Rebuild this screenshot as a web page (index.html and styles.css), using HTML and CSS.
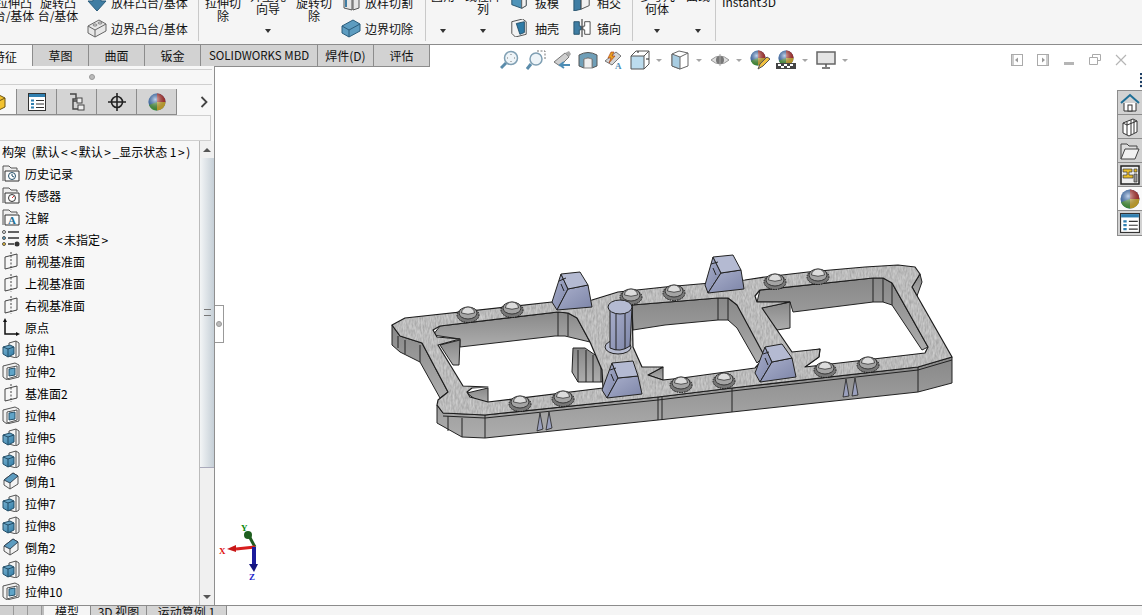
FILE: index.html
```html
<!DOCTYPE html>
<html lang="zh">
<head>
<meta charset="utf-8">
<title>SOLIDWORKS</title>
<link rel="stylesheet" href="styles.css">
</head>
<body>
<svg class="defs" width="0" height="0" aria-hidden="true">
  <defs>
    <linearGradient id="blueFace" x1="0" y1="0" x2="1" y2="1"><stop offset="0" stop-color="#7fb6d3"/><stop offset="1" stop-color="#2f7ba6"/></linearGradient>
    <linearGradient id="wallGrad" x1="0" y1="0" x2="0" y2="1"><stop offset="0" stop-color="#888888"/><stop offset="1" stop-color="#adadad"/></linearGradient>
    <linearGradient id="blueGrad" x1="0" y1="0" x2="1" y2="1"><stop offset="0" stop-color="#aab0cc"/><stop offset="1" stop-color="#7d85a8"/></linearGradient>
    <radialGradient id="ballGrad" cx=".4" cy=".35" r=".7"><stop offset="0" stop-color="#ffffff" stop-opacity=".7"/><stop offset="1" stop-color="#000000" stop-opacity=".2"/></radialGradient>
    <filter id="brushed" x="0" y="0" width="100%" height="100%">
      <feTurbulence type="fractalNoise" baseFrequency="0.6 0.2" numOctaves="2" seed="4"/>
      <feColorMatrix type="matrix" values="0 0 0 0 0.92  0 0 0 0 0.92  0 0 0 0 0.92  0.7 0 0 0 -0.15"/>
      <feComposite in2="SourceGraphic" operator="in"/>
      <feMerge><feMergeNode in="SourceGraphic"/><feMergeNode/></feMerge>
    </filter>
    <symbol id="i-ext" viewBox="0 0 18 18">
      <path d="M7 3l7-2 3 2v13l-3 2-7-2z" fill="#f4f4f4" stroke="#555"/><path d="M14 1v17" stroke="#555" fill="none"/>
      <path d="M1 7l7-2 4 2v7l-6 3-5-3z" fill="url(#blueFace)" stroke="#234e68"/><path d="M1 7l5 2 6-2M6 9v8" stroke="#234e68" fill="none"/>
    </symbol>
    <symbol id="i-cut" viewBox="0 0 18 18">
      <path d="M1 4l12-3 4 2v12l-12 3-4-3z" fill="#f1f1f1" stroke="#555"/><path d="M5 6l10-2v10l-10 3z" fill="#fff" stroke="#555"/>
      <path d="M7 7l6-1v7l-6 1z" fill="#5fa4c8" stroke="#234e68"/>
    </symbol>
    <symbol id="i-chamfer" viewBox="0 0 18 18">
      <path d="M2 8l9-7 5 3v8l-8 5-6-4z" fill="#f3f3f3" stroke="#555"/><path d="M2 8l6 3 8-7-5-3z" fill="#5d9cc0" stroke="#345"/><path d="M8 11v6" stroke="#555"/>
    </symbol>
    <symbol id="i-plane" viewBox="0 0 18 18">
      <path d="M3 5l12-3v12l-12 3z" fill="none" stroke="#444"/><path d="M9 0v18" stroke="#444" stroke-dasharray="2 1.5" fill="none"/>
    </symbol>
    <symbol id="i-folder" viewBox="0 0 18 18">
      <path d="M1 17V2h6l2 2h6v2" fill="#eee" stroke="#555"/><path d="M3 17V7h14v10z" fill="#fbfbfb" stroke="#333"/>
    </symbol>
    <symbol id="i-block" viewBox="0 0 20 20">
      <path d="M1 8l11-6 7 4v7l-11 6-7-4z" fill="#e7e7e7" stroke="#666"/><path d="M1 8l7 4 11-6M8 12v7" fill="none" stroke="#666"/>
      <ellipse cx="8" cy="7" rx="2" ry="1" fill="#fff" stroke="#777"/><ellipse cx="13" cy="5" rx="2" ry="1" fill="#fff" stroke="#777"/>
    </symbol>
    <symbol id="i-ball" viewBox="0 0 18 18">
      <circle cx="9" cy="9" r="8.5" fill="#2f6fc4"/><path d="M9 9L9 .5A8.5 8.5 0 0 1 17.5 9z" fill="#c22b26"/><path d="M9 9h8.5A8.5 8.5 0 0 1 9 17.5z" fill="#e8bd2b"/><path d="M9 9v8.5A8.5 8.5 0 0 1 1 12z" fill="#4aa53a"/>
      <circle cx="9" cy="9" r="8.5" fill="url(#ballGrad)"/>
    </symbol>
    <symbol id="i-list" viewBox="0 0 18 18">
      <rect x=".5" y=".5" width="17" height="17" fill="#fff" stroke="#333"/><rect x="1" y="1" width="16" height="3" fill="#2f7fb0"/>
      <path d="M3 6.500h3v2H3zM3 10h3v2H3zM3 13.500h3v2H3z" fill="#2f7fb0"/><path d="M8 7.500h8M8 11h8M8 14.500h8" stroke="#333" fill="none"/>
    </symbol>
  </defs>
</svg>

<div class="ribbon">
  <div class="big">拉伸凸<br>台/基体</div>
  <div class="big">旋转凸<br>台/基体</div>
  <div class="stack w111">
    <div class="tool"><svg class="ti" viewBox="0 0 20 20"><path d="M6 0h8v9h5l-9 10-9-10h5z" fill="#3f7da3" stroke="#2b5d7c"/></svg>放样凸台/基体</div>
    <div class="tool"><svg class="ti"><use href="#i-block"/></svg>边界凸台/基体</div>
  </div>
  <div class="sep"></div>
  <div class="big w48">拉伸切<br>除</div>
  <div class="big raised w42">异型孔<br>向导<i class="caret"></i></div>
  <div class="big w50">旋转切<br>除</div>
  <div class="stack w84">
    <div class="tool"><svg class="ti" viewBox="0 0 20 20"><path d="M3 2l8-2v18l-8-2zM12 2l6-1v15l-6 2z" fill="#e6e6e6" stroke="#555"/><path d="M5 3v12" stroke="#3f7da3" stroke-width="2"/></svg>放样切割</div>
    <div class="tool"><svg class="ti" viewBox="0 0 20 20"><path d="M1 8l11-6 7 4v7l-11 6-7-4z" fill="#5d9cc0" stroke="#2b5d7c"/><path d="M1 8l7 4 11-6M8 12v7" fill="none" stroke="#2b5d7c"/></svg>边界切除</div>
  </div>
  <div class="sep"></div>
  <div class="big raised w34">圆角<br>&nbsp;<i class="caret"></i></div>
  <div class="big raised w46">线性阵<br>列<i class="caret"></i></div>
  <div class="stack w64">
    <div class="tool tight"><svg class="ti" viewBox="0 0 20 20"><path d="M2 3l7-3 9 4v10l-5 3-11-4z" fill="#4f93b8" stroke="#234e68"/><path d="M13 7l5-3v10l-5 3z" fill="#f1f1f1" stroke="#555"/></svg>拔模</div>
    <div class="tool tight"><svg class="ti" viewBox="0 0 20 20"><path d="M2 3l12-3 4 3v14l-12 3-4-4z" fill="#f3f3f3" stroke="#444"/><path d="M7 5l9-2v12l-5 2z" fill="#2f7ba6" stroke="#234e68"/></svg>抽壳</div>
  </div>
  <div class="stack w64 narrow">
    <div class="tool tight"><svg class="ti" viewBox="0 0 20 20"><path d="M1 6l8-2v14l-8 2z" fill="#3f7da3" stroke="#234e68"/><path d="M9 4l9-4v14l-9 4z" fill="#f1f1f1" stroke="#444"/></svg>相交</div>
    <div class="tool tight"><svg class="ti" viewBox="0 0 20 20"><path d="M1 3h6v5h2v4H7v5H1z" fill="#3f7da3" stroke="#234e68"/><path d="M19 3h-6v5h-2v4h2v5h6z" fill="#fff" stroke="#444"/><path d="M10 0v20" stroke="#111"/></svg>镜向</div>
  </div>
  <div class="sep"></div>
  <div class="big raised w48">参考几<br>何体<i class="caret"></i></div>
  <div class="big raised w34">曲线<br>&nbsp;<i class="caret"></i></div>
  <div class="sep"></div>
  <div class="instant">Instant3D</div>
</div>

<div class="tabrow">
  <div class="tab tab-active">特征</div>
  <div class="tab w56">草图</div>
  <div class="tab w56">曲面</div>
  <div class="tab w56">钣金</div>
  <div class="tab w117"><span class="latin">SOLIDWORKS MBD</span></div>
  <div class="tab w56">焊件(D)</div>
  <div class="tab w56">评估</div>
</div>

<div class="main">
  <aside class="panel">
    <div class="grip"><span class="dot"></span></div>
    <div class="ptabs">
      <div class="ptab ptab-first"><svg class="pi-cube" viewBox="0 0 18 18"><path d="M1 5l8-4 8 4v9l-8 4-8-4z" fill="#f2c230" stroke="#6b5310"/><path d="M1 5l8 4 8-4M9 9v9" fill="none" stroke="#6b5310"/></svg></div>
      <div class="ptab"><svg class="pi"><use href="#i-list"/></svg></div>
      <div class="ptab"><svg class="pi" viewBox="0 0 18 18"><path d="M2 1h6v5H5v10h5M5 8h5" fill="none" stroke="#444" stroke-width="1.400"/><rect x="9" y="5" width="5" height="5" fill="#eee" stroke="#444"/><rect x="10" y="12" width="6" height="5" fill="#eee" stroke="#444"/></svg></div>
      <div class="ptab"><svg class="pi" viewBox="0 0 18 18"><circle cx="9" cy="9" r="5.500" fill="none" stroke="#222" stroke-width="1.600"/><path d="M9 0v18M0 9h18" stroke="#222" stroke-width="1.600"/></svg></div>
      <div class="ptab"><svg class="pi"><use href="#i-ball"/></svg></div>
      <div class="pmore"><svg class="chev" viewBox="0 0 8 12"><path d="M1.500 1l5 5-5 5" fill="none" stroke="#444" stroke-width="1.800"/></svg></div>
    </div>
    <div class="filter"></div>
    <div class="treewrap">
      <div class="tree">
        <div class="row"><span class="root-text">构架 &nbsp;(默认<span class="ang">&lt;</span><span class="ang">&lt;</span>默认<span class="ang">&gt;</span>_显示状态 1<span class="ang">&gt;</span>)</span></div>
        <div class="row"><svg class="ri" viewBox="0 0 18 18"><use href="#i-folder"/><circle cx="10" cy="12" r="3.500" fill="#fff" stroke="#234e68"/><path d="M10 10v2l2 1" stroke="#234e68" fill="none"/></svg>历史记录</div>
        <div class="row"><svg class="ri" viewBox="0 0 18 18"><use href="#i-folder"/><circle cx="10" cy="12" r="3.500" fill="#fff" stroke="#333"/><path d="M10 12l2-2" stroke="#d33"/></svg>传感器</div>
        <div class="row"><svg class="ri" viewBox="0 0 18 18"><use href="#i-folder"/><text x="6" y="16" class="icon-a">A</text></svg>注解</div>
        <div class="row"><svg class="ri" viewBox="0 0 18 18"><circle cx="2" cy="2" r="1.500" fill="#eee" stroke="#555"/><circle cx="2" cy="8" r="1.500" fill="#5fa4c8" stroke="#555"/><circle cx="2" cy="14" r="1.500" fill="#f2c230" stroke="#555"/><path d="M6 2h11M6 8h11M6 14h6" stroke="#333" stroke-width="1.400"/><circle cx="15" cy="14" r="2.500" fill="#333"/></svg><span>材质 &nbsp;<span class="ang">&lt;</span>未指定<span class="ang">&gt;</span></span></div>
        <div class="row"><svg class="ri"><use href="#i-plane"/></svg>前视基准面</div>
        <div class="row"><svg class="ri"><use href="#i-plane"/></svg>上视基准面</div>
        <div class="row"><svg class="ri"><use href="#i-plane"/></svg>右视基准面</div>
        <div class="row"><svg class="ri" viewBox="0 0 18 18"><path d="M3 2v14h12" fill="none" stroke="#111" stroke-width="1.500"/><path d="M3 0l-2 4h4zM18 16l-4-2v4z" fill="#111"/></svg>原点</div>
        <div class="row"><svg class="ri"><use href="#i-ext"/></svg>拉伸1</div>
        <div class="row"><svg class="ri"><use href="#i-cut"/></svg>拉伸2</div>
        <div class="row"><svg class="ri"><use href="#i-plane"/></svg>基准面2</div>
        <div class="row"><svg class="ri"><use href="#i-cut"/></svg>拉伸4</div>
        <div class="row"><svg class="ri"><use href="#i-ext"/></svg>拉伸5</div>
        <div class="row"><svg class="ri"><use href="#i-ext"/></svg>拉伸6</div>
        <div class="row"><svg class="ri"><use href="#i-chamfer"/></svg>倒角1</div>
        <div class="row"><svg class="ri"><use href="#i-ext"/></svg>拉伸7</div>
        <div class="row"><svg class="ri"><use href="#i-ext"/></svg>拉伸8</div>
        <div class="row"><svg class="ri"><use href="#i-chamfer"/></svg>倒角2</div>
        <div class="row"><svg class="ri"><use href="#i-ext"/></svg>拉伸9</div>
        <div class="row"><svg class="ri"><use href="#i-cut"/></svg>拉伸10</div>
      </div>
      <div class="scroll">
        <div class="sbtn"><i class="up"></i></div>
        <div class="thumb"><span class="thumb-grip"></span></div>
        <div class="track"></div>
        <div class="sbtn"><i class="down"></i></div>
      </div>
    </div>
  </aside>

  <section class="view">
    <div class="handle"><span class="dot"></span></div>

    <svg class="model" viewBox="215 67 927 538" aria-label="model">
      <defs>
        <g id="bolt">
          <ellipse cx="0" cy="2" rx="11" ry="7.500" fill="#777" stroke="#111" stroke-dasharray="1.500 1"/>
          <ellipse cx="0" cy="0" rx="9" ry="6" fill="#a4a4a4" stroke="#222" stroke-width=".8"/>
          <path d="M-6.500 0a6.500 6 0 0 1 13 0q-6.500 2.500-13 0z" fill="#dcdcdc" stroke="#333" stroke-width=".8"/>
        </g>
        <path id="topface" fill-rule="evenodd" d="M392 325L405 318L552 302L592 300L618 292L665 287L745 280L765 277L808 272L865 267L898 265L915 267L920 274L912 287L952 357L918 367L732 388L658 397L485 415L443 413L437 405L438 400L448 392L422 343L400 336z
        M433 330L440 326L558 312L568 313L577 318L590 342L602 370L603 388L488 402L470 397L467 392L472 388L488 387L463 386L438 345L460 339L437 337z
        M632 305L718 298L728 298L737 305L765 357L755 368L682 378L663 380L648 375L663 367L642 367L633 347z
        M755 296L760 290L873 278L883 278L892 283L928 347L925 353L805 367L819 357L820 349L792 352L762 308L790 302L757 302z"/>
      </defs>
      <!-- outer side walls -->
      <g class="wall">
        <path d="M392 325L392 345L400 352L420 362L440 398L448 392L422 343L400 336z"/>
        <path d="M437 405L437 423L462 437L485 438L658 420L732 412L918 392L952 383L952 357L918 367L732 388L658 397L485 415L443 413z"/>
        <path d="M920 274L912 287L917 296L922 282z"/>
      </g>
      <g class="edge">
        <path d="M448 416L448 431M462 418L462 437M485 415L485 438M658 397L658 420M662 397L662 420M732 388L732 412M918 367L918 392M405 340L405 354M398 336L398 348M420 345L420 362"/>
        <path d="M443 416L485 418L658 400L732 391L918 370L952 360"/>
      </g>
      <!-- inner walls seen through the windows -->
      <g class="wall">
        <path d="M440 326L558 312L568 313L577 318L590 342L565 336L555 336L460 347L460 339L433 335z"/>
        <path d="M440 345L460 340L459 365L453 365z"/>
        <path d="M467 393L488 388L488 402L480 403z"/>
        <path d="M573 348L585 348L598 357L607 365L602 382L578 382L572 372z"/>
        <path d="M632 305L718 298L728 298L737 305L765 355L757 363L737 328L728 320L718 320L665 325L633 330z"/>
        <path d="M648 375L663 367L663 380z"/>
        <path d="M760 290L873 278L883 278L892 283L928 347L922 350L892 305L883 302L873 302L793 312L790 302L757 302z"/>
        <path d="M761 308L790 302L790 328L777 330z"/>
        <path d="M792 354L820 349L819 357L805 367z"/>
      </g>
      <g class="edge">
        <path d="M558 312L558 336M568 313L568 336M718 298L718 320M728 298L728 320M873 278L873 302M883 278L883 302M892 283L892 305"/>
        <path d="M578 350L578 382M586 350L586 382M593 355L593 382M601 360L601 382"/>
      </g>
      <!-- top face with the three windows cut out -->
      <use href="#topface" class="top-fill"/>
      <use href="#topface" class="top-line"/>
      <!-- bolts -->
      <g class="bolts">
        <use href="#bolt" x="468" y="313"/>
        <use href="#bolt" x="512" y="308"/>
        <use href="#bolt" x="631" y="295"/>
        <use href="#bolt" x="674" y="291"/>
        <use href="#bolt" x="775" y="280"/>
        <use href="#bolt" x="818" y="275"/>
        <use href="#bolt" x="520" y="402"/>
        <use href="#bolt" x="563" y="397"/>
        <use href="#bolt" x="681" y="383"/>
        <use href="#bolt" x="724" y="379"/>
        <use href="#bolt" x="825" y="368"/>
        <use href="#bolt" x="868" y="363"/>
      </g>
      <!-- cylinder -->
      <ellipse cx="618" cy="347" rx="13" ry="7" fill="#b7bcd0" stroke="#222"/>
      <path class="blue" d="M610 307L610 348Q620 353 630 346L632 307z"/>
      <path class="edge" d="M616 309L616 350M625 309L625 349"/>
      <ellipse class="bluetop" cx="620" cy="307" rx="12" ry="7"/>
      <!-- wedges -->
      <g class="wedge">
        <path class="blue" d="M561 274L568 289L557 310L552 302z"/><path class="blue" d="M568 289L588 285L592 307L557 310z"/><path class="bluetop" d="M561 274L580 272L588 285L568 289z"/>
        <path class="edge" d="M559 281L566 278M564 291L561 284"/>
        <path class="blue" d="M612 363L618 378L607 398L602 390z"/><path class="blue" d="M618 378L638 376L642 394L607 398z"/><path class="bluetop" d="M612 363L633 361L638 376L618 378z"/>
        <path class="edge" d="M610 370L616 368M614 381L611 374"/>
        <path class="blue" d="M713 257L721 273L708 293L705 285z"/><path class="blue" d="M721 273L741 270L744 289L708 293z"/><path class="bluetop" d="M713 257L733 255L741 270L721 273z"/>
        <path class="edge" d="M711 264L718 262M716 275L713 268"/>
        <path class="blue" d="M765 347L772 362L760 382L755 373z"/><path class="blue" d="M772 362L792 358L796 377L760 382z"/><path class="bluetop" d="M765 347L782 344L792 358L772 362z"/>
        <path class="edge" d="M763 354L769 352M768 365L765 358"/>
      </g>
      <!-- pins -->
      <g class="pin">
        <path d="M540 413L543 429L537 431z"/><path d="M549 412L552 428L546 430z"/>
        <path d="M846 379L849 396L843 397z"/><path d="M855 378L858 395L852 396z"/>
      </g>
      <!-- triad -->
      <g class="triad">
        <path d="M255 547L248 534" stroke="#1f5a1f" stroke-width="3" fill="none"/><circle cx="248" cy="535" r="4" fill="#1f5f1f"/>
        <path d="M255 547L236 549" stroke="#d81e1e" stroke-width="3" fill="none"/><path d="M236 545L227 549L236 552z" fill="#c81818"/>
        <path d="M254 547L254 566" stroke="#1c1c9c" stroke-width="4" fill="none"/><path d="M249 564L254 572L258 564z" fill="#14147f"/>
        <text x="241" y="531" class="t-y">Y</text><text x="219" y="554" class="t-x">X</text><text x="249" y="580" class="t-z">Z</text>
      </g>
    </svg>

    <div class="vbar">
      <svg class="vi" viewBox="0 0 20 20"><circle cx="11" cy="8" r="6.500" fill="#eef4f8" stroke="#7f9fb3" stroke-width="1.500"/><path d="M6 13l-5 5" stroke="#5b8cab" stroke-width="3"/><path d="M11 4v1M11 11v1M7 8h1M14 8h1" stroke="#777"/></svg>
      <svg class="vi" viewBox="0 0 20 20"><path d="M11 1h8v8" fill="none" stroke="#777" stroke-dasharray="2 1.500"/><circle cx="10" cy="9" r="6" fill="#eef4f8" stroke="#7f9fb3" stroke-width="1.500"/><path d="M5 14l-4 5" stroke="#5b8cab" stroke-width="3"/></svg>
      <svg class="vi" viewBox="0 0 20 20"><path d="M2 12l11-9 4 4-9 9z" fill="#cfcfcf" stroke="#777"/><path d="M13 3l4-2 2 3-2 3z" fill="#aaa"/><path d="M18 15H9M12 12l-4 3 4 3" stroke="#4d8db5" stroke-width="2" fill="none"/></svg>
      <svg class="vi" viewBox="0 0 20 20"><path d="M1 5q9-5 18 0v11l-5 2V9q-4-2-8 0v9l-5-2z" fill="#6f9fb8" stroke="#555"/><path d="M6 9q4-2 8 0v9H6z" fill="#eee" stroke="#888"/></svg>
      <svg class="vi" viewBox="0 0 20 20"><path d="M1 11l11-9 5 4-9 9z" fill="#d5d5d5" stroke="#777"/><path d="M7 2L4 8h3l-2 5 6-7H8l2-4z" fill="#e8a020" stroke="#a03010" stroke-width=".6"/><text x="11" y="19" class="icon-a small">A</text></svg>
      <span class="vgroup"><svg class="vi" viewBox="0 0 20 20"><path d="M1 6h13v13H1z" fill="#bcdcee" stroke="#555"/><path d="M1 6l5-5h13v13l-5 5M14 6l5-5" fill="none" stroke="#555"/><path d="M8 1v2M16 9h3" stroke="#222"/></svg><i class="vc"></i></span>
      <span class="vgroup"><svg class="vi" viewBox="0 0 20 20"><path d="M2 4l7-3 9 2v13l-8 3-8-3z" fill="#fff" stroke="#666"/><path d="M2 4l8 3v12l-8-3z" fill="#a8cde2" stroke="#666"/><path d="M10 7l8-4" stroke="#666"/></svg><i class="vc"></i></span>
      <span class="vgroup"><svg class="vi" viewBox="0 0 20 20"><path d="M1 10q9-8 18 0q-9 8-18 0z" fill="#ddd" stroke="#999"/><circle cx="10" cy="10" r="4" fill="#777"/><path d="M10 4v12" stroke="#aaa"/></svg><i class="vc"></i></span>
      <svg class="vi" viewBox="0 0 20 20"><use href="#i-ball" width="16" height="16"/><path d="M8 19l2-5 7-7 3 2-7 7z" fill="#f0c040" stroke="#555"/></svg>
      <span class="vgroup"><svg class="vi" viewBox="0 0 20 20"><use href="#i-ball" x="2" width="16" height="16"/><path d="M0 13h20v6H0z" fill="#444"/><path d="M2 14h3v2H2zM8 14h3v2H8zM14 14h3v2h-3zM5 16h3v2H5zM11 16h3v2h-3z" fill="#fff"/></svg><i class="vc"></i></span>
      <span class="vgroup"><svg class="vi" viewBox="0 0 20 20"><rect x="1" y="2" width="18" height="12" fill="#e4e4e4" stroke="#666" stroke-width="1.500"/><path d="M10 14v3M6 18h8" stroke="#555" stroke-width="1.500"/></svg><i class="vc"></i></span>
    </div>

    <div class="wincontrols">
      <svg class="wi" viewBox="0 0 12 12"><rect x=".5" y=".5" width="11" height="11" fill="none" stroke="#aaa"/><path d="M1 1h2v10H1z" fill="#ccc"/><path d="M7 3.500L4 6l3 2.500z" fill="#999"/></svg>
      <svg class="wi" viewBox="0 0 12 12"><rect x=".5" y=".5" width="11" height="11" fill="none" stroke="#aaa"/><path d="M9 1h2v10H9z" fill="#ccc"/><path d="M5 3.500L8 6l-3 2.500z" fill="#999"/></svg>
      <svg class="wi" viewBox="0 0 12 12"><rect x="1" y="8" width="10" height="3" fill="#b5b5b5"/></svg>
      <svg class="wi" viewBox="0 0 12 12"><path d="M3.500 3V.5h8v6H9M.5 3.500h8v7h-8z" fill="none" stroke="#aaa"/></svg>
      <svg class="wi" viewBox="0 0 12 12"><path d="M1 1l10 10M11 1L1 11" stroke="#b5b5b5" stroke-width="1.200"/></svg>
    </div>

    <div class="edge-sliver"></div>

    <div class="taskpane">
      <div class="task"><svg class="tk" viewBox="0 0 20 20"><path d="M1 10L10 2l9 8" fill="none" stroke="#1f6f96" stroke-width="2"/><path d="M4 10v8h12v-8" fill="#fff" stroke="#333"/><rect x="8" y="12" width="4" height="6" fill="#fff" stroke="#333"/></svg></div>
      <div class="task"><svg class="tk" viewBox="0 0 20 20"><path d="M3 6l10-4 4 2v11l-8 4-6-3z" fill="#fff" stroke="#333"/><path d="M7 5v13M11 3v15M14 3v13M3 6l4 2 10-4" fill="none" stroke="#333"/></svg></div>
      <div class="task"><svg class="tk" viewBox="0 0 20 20"><path d="M1 18V3h6l2 2h8v3" fill="#ddd" stroke="#444"/><path d="M1 18l4-10h14l-4 10z" fill="#f1f1f1" stroke="#444"/></svg></div>
      <div class="task"><svg class="tk" viewBox="0 0 20 20"><rect x="1" y="1" width="18" height="18" fill="#eee" stroke="#222" stroke-width="1.500"/><path d="M3 4h9v3H9v3h4v3H3v-3h4V7H3z" fill="#e8bd2b" stroke="#333" stroke-width=".7"/><path d="M14 4h3v3h-3z" fill="#e8bd2b" stroke="#333" stroke-width=".7"/><path d="M14 9h3v8h-3z" fill="#999" stroke="#333" stroke-width=".7"/></svg></div>
      <div class="task task-on"><svg class="tk"><use href="#i-ball"/></svg></div>
      <div class="task"><svg class="tk"><use href="#i-list"/></svg></div>
    </div>
  </section>
</div>

<div class="bottom">
  <div class="nav">
    <span class="navb"></span><span class="navb"></span><span class="navb"></span>
  </div>
  <div class="btab btab-on">模型</div>
  <div class="btab w57">3D 视图</div>
  <div class="btab w80">运动算例 1</div>
</div>
</body>
</html>
```

FILE: styles.css
```css
* { box-sizing: border-box; }
html, body { margin: 0; height: 615px; overflow: hidden; }
body {
  width: 1142px;
  display: flex;
  flex-direction: column;
  background: #fff;
  color: #111;
  font: 12px/13px "Noto Sans CJK SC", "Noto Sans", sans-serif;
}
.defs { position: absolute; }

/* ribbon */
.ribbon {
  height: 44px;
  flex: none;
  display: flex;
  overflow: hidden;
  background: #f5f5f5;
  margin-left: -8px;
  width: 1150px;
}
.big {
  width: 44px;
  flex: none;
  text-align: center;
  margin-top: -4px;
  position: relative;
  height: 48px;
  white-space: nowrap;
}
.big.raised { margin-top: -11px; height: 55px; }
.w48 { width: 48px; }
.w42 { width: 42px; }
.w50 { width: 50px; }
.w34 { width: 34px; }
.w46 { width: 46px; }
.caret {
  position: absolute;
  left: 0;
  right: 0;
  top: 40px;
  width: 0;
  height: 0;
  margin: 0 auto;
  border: 3px solid transparent;
  border-top: 4px solid #333;
  border-bottom: 0;
}
.stack {
  flex: none;
  display: flex;
  flex-direction: column;
  margin-top: -11px;
  padding-left: 7px;
}
.w111 { width: 118px; }
.w84 { width: 86px; padding-left: 2px; }
.w64 { width: 63px; padding-left: 4px; }
.tool {
  height: 26px;
  display: flex;
  align-items: center;
  gap: 4px;
  white-space: nowrap;
}
.tool.tight { gap: 7px; }
.narrow .tool.tight { gap: 6px; }
.ti { width: 20px; height: 20px; flex: none; }
.tight .ti { width: 18px; height: 18px; }
.sep {
  flex: none;
  width: 1px;
  height: 41px;
  background: #c9c9c9;
}
.instant { padding: 0 0 0 6px; margin-top: -5px; }

/* feature tabs */
.tabrow {
  height: 23px;
  flex: none;
  display: flex;
  border-top: 1px solid #8c8c8c;
}
.tab {
  height: 22px;
  flex: none;
  display: flex;
  align-items: center;
  justify-content: center;
  background: #d2d2d2;
  border-left: 1px solid #8c8c8c;
  border-bottom: 1px solid #8c8c8c;
  white-space: nowrap;
}
.tab:last-child { border-right: 1px solid #8c8c8c; width: 57px; }
.tab-active {
  width: 54px;
  margin-left: -22px;
  background: #f7f7f7;
  border: 0;
}
.w56 { width: 56px; }
.w117 { width: 117px; }
.latin { font-size: 11.5px; }

/* layout */
.main { flex: 1; display: flex; min-height: 0; }
.panel {
  width: 215px;
  flex: none;
  display: flex;
  flex-direction: column;
  background: #f7f7f7;
  border-right: 1px solid #8f8f8f;
  margin-top: -1px;
}
.grip {
  height: 16px;
  margin: 3px 2px 0 0;
  flex: none;
  border-top: 1px solid #cfcfcf;
  border-bottom: 1px solid #cfcfcf;
  display: flex;
  align-items: center;
  justify-content: center;
  padding-right: 28px;
}
.dot {
  width: 6px;
  height: 6px;
  border-radius: 50%;
  background: #bbb;
  border: 1px solid #999;
  display: block;
}
.ptabs { height: 26px; flex: none; display: flex; margin-top: 4px; }
.ptab {
  width: 40px;
  height: 26px;
  flex: none;
  display: flex;
  align-items: center;
  justify-content: center;
  background: #d4d4d4;
  border-right: 1px solid #8c8c8c;
  border-bottom: 1px solid #8c8c8c;
}
.ptab-first {
  width: 17px;
  background: #f7f7f7;
  justify-content: flex-end;
  overflow: hidden;
  padding-right: 10px;
}
.pi { width: 18px; height: 18px; }
.pi-cube { width: 18px; height: 18px; flex: none; }
.pmore { flex: 1; display: flex; align-items: center; justify-content: flex-end; padding-right: 6px; }
.chev { width: 8px; height: 12px; }
.filter {
  height: 26px;
  flex: none;
  margin-right: 3px;
  border: 1px solid #cfcfcf;
  border-left: 0;
  background: #f7f7f7;
}
.treewrap { flex: 1; display: flex; min-height: 0; }
.tree { flex: 1; overflow: hidden; }
.row {
  height: 22px;
  display: flex;
  align-items: center;
  gap: 5px;
  padding-left: 2px;
  padding-bottom: 2px;
  color: #000;
  white-space: nowrap;
}
.ang { margin: 0 1.500px; }
.ri { width: 18px; height: 18px; flex: none; }
.icon-a { font: bold 11px "Liberation Serif", serif; fill: #1f6f96; }
.icon-a.small { font-size: 9px; fill: #4d8db5; }

/* scrollbar */
.scroll { width: 15px; flex: none; display: flex; flex-direction: column; background: #f0f0f0; border-left: 1px solid #bbb; }
.sbtn { height: 17px; flex: none; display: flex; align-items: center; justify-content: center; background: #f0f0f0; }
.up, .down { width: 0; height: 0; border: 4px solid transparent; }
.up { border-bottom: 4px solid #555; border-top: 0; }
.down { border-top: 4px solid #555; border-bottom: 0; }
.thumb {
  height: 310px;
  flex: none;
  display: flex;
  align-items: center;
  justify-content: center;
  background: linear-gradient(90deg, #f3f5f6, #c5cfd7);
  border-bottom: 1px solid #aab;
}
.thumb-grip { width: 7px; height: 7px; border-top: 1px solid #777; border-bottom: 1px solid #777; display: block; }
.track { flex: 1; }

/* graphics area */
.view { flex: 1; position: relative; background: #fff; }
.handle {
  position: absolute;
  left: 0;
  top: 238px;
  width: 9px;
  height: 38px;
  background: #fff;
  border: 1px solid #999;
  border-left: 0;
  display: flex;
  align-items: center;
  justify-content: center;
}
.model { position: absolute; left: 0; top: 0; width: 927px; height: 538px; }
.wall path { fill: url(#wallGrad); stroke: #222; stroke-width: 1; stroke-linejoin: round; }
.edge, .edge path { fill: none; stroke: #222; stroke-width: 1; }
.top-fill { fill: #a8a8a8; stroke: none; filter: url(#brushed); }
.top-line { fill: none; stroke: #1c1c1c; stroke-width: 1.200; stroke-linejoin: round; }
.blue { fill: url(#blueGrad); stroke: #222; stroke-width: 1; stroke-linejoin: round; }
.bluetop { fill: #b4bad2; stroke: #222; stroke-width: 1; stroke-linejoin: round; }
.pin path { fill: #9aa0bd; stroke: #222; stroke-width: .8; }
.triad text { font: bold 9px "Liberation Serif", serif; }
.t-x { fill: #e01010; }
.t-y { fill: #0c8a0c; }
.t-z { fill: #1c1ccc; }

.vbar {
  position: absolute;
  top: -17px;
  left: 285px;
  display: flex;
  align-items: center;
  gap: 6px;
}
.vi { width: 20px; height: 20px; flex: none; display: block; }
.vgroup { display: flex; align-items: center; gap: 6px; margin-right: 2px; }
.vc {
  display: block;
  width: 0;
  height: 0;
  border: 3px solid transparent;
  border-top: 3px solid #a5a5a5;
  border-bottom: 0;
}
.wincontrols {
  position: absolute;
  top: -13px;
  right: 15px;
  display: flex;
  gap: 14px;
}
.wi { width: 12px; height: 12px; display: block; }
.edge-sliver {
  position: absolute;
  top: 6px;
  right: 0;
  width: 2px;
  height: 15px;
  background: repeating-linear-gradient(180deg, #1d3f66 0 2px, #e8e8e8 2px 4px);
}
.taskpane {
  position: absolute;
  top: 23px;
  right: 0;
  width: 25px;
  border: 1px solid #8c8c8c;
  border-right: 0;
}
.task {
  height: 24px;
  display: flex;
  align-items: center;
  justify-content: center;
  background: #d2d2d2;
  border-bottom: 1px solid #8c8c8c;
}
.task:last-child { border-bottom: 0; }
.task-on { background: #fafafa; }
.tk { width: 20px; height: 20px; }

/* bottom tabs */
.bottom {
  height: 10px;
  flex: none;
  display: flex;
  overflow: hidden;
  border-top: 1px solid #8c8c8c;
  background: #f5f5f5;
}
.nav { width: 44px; flex: none; display: flex; background: #bdbdbd; }
.navb { width: 14px; height: 10px; border-right: 1px solid #999; background: #cfcfcf; }
.btab {
  flex: none;
  height: 10px;
  display: flex;
  justify-content: center;
  line-height: 12px;
  white-space: nowrap;
  background: #d4d4d4;
  border-left: 1px solid #8c8c8c;
  border-right: 1px solid #8c8c8c;
}
.btab-on { width: 46px; background: #f5f5f5; border: 0; }
.w57 { width: 57px; }
.w80 { width: 80px; border-left: 0; }
```
